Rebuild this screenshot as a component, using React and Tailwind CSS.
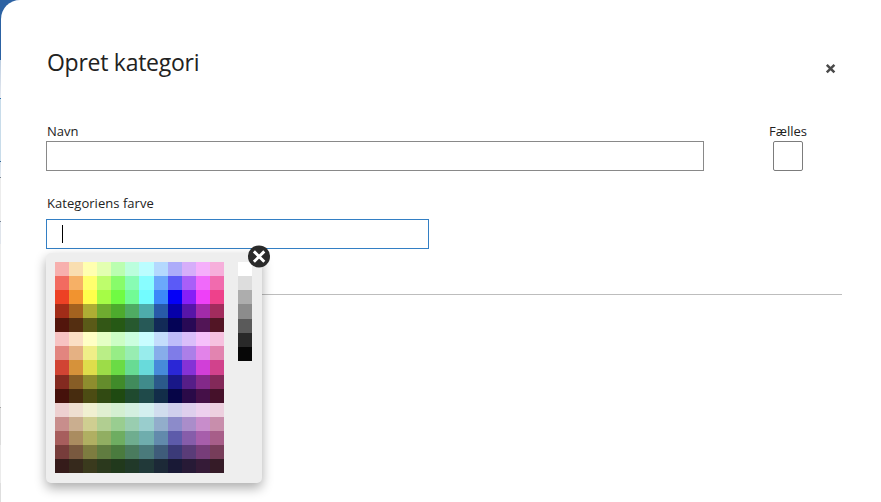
import React from 'react';

const swatches = [
  ['#f7b0ae', '#f9deb0', '#ffffb0', '#e3ffb1', '#bbfeb0', '#bbfedd', '#bbfdff', '#b4d9fe', '#adacfa', '#d6aefa', '#f5affb', '#f6afdb'],
  ['#f26b60', '#f6b066', '#ffff6e', '#befd6c', '#88fc6a', '#88fcb4', '#88fdff', '#6ba8fb', '#5b5af7', '#a95ff8', '#f06afa', '#f16bae'],
  ['#ed4124', '#f1932f', '#ffff4b', '#a6fc46', '#70fb43', '#72fb96', '#72fcff', '#3c88f8', '#0400f7', '#861ff7', '#ee40f8', '#ee418b'],
  ['#a12c18', '#a4621f', '#aead34', '#6fac30', '#4dab2d', '#4fab63', '#4eacac', '#285aa8', '#0600a8', '#5715a8', '#a22ba9', '#a22c5d'],
  ['#52150c', '#542e11', '#5a5a18', '#335716', '#265915', '#27592f', '#275957', '#122a57', '#040356', '#280955', '#521556', '#521525'],
  ['#f7c3c2', '#fbdfc4', '#ffffc5', '#e5ffc5', '#ccfec4', '#cbfedf', '#c9fdff', '#c4ddfc', '#bebcfa', '#dabefa', '#f6c0fb', '#f6c1df'],
  ['#e2857f', '#e5b183', '#efee88', '#baee87', '#97ed86', '#98edb2', '#98ecec', '#87adea', '#7f7ce8', '#ac7fe8', '#e283e9', '#e284b0'],
  ['#d14433', '#d6923a', '#dfdd4b', '#9ddc48', '#6adb45', '#68db94', '#68dadb', '#478ad9', '#2a27d6', '#8532d6', '#d13fd8', '#d1428c'],
  ['#832a20', '#875d26', '#8e8d2e', '#648c2c', '#408b2a', '#418b5c', '#408b8b', '#2b598a', '#191788', '#561e88', '#832989', '#832959'],
  ['#45110b', '#472c0f', '#4c4c13', '#314a12', '#1f4a11', '#1f4a2f', '#1f4a4a', '#122d49', '#060547', '#2a0a48', '#451048', '#45112a'],
  ['#edd0d0', '#eedfd0', '#f0f0d1', '#e0efd1', '#d4efd1', '#d4efe0', '#d4efef', '#d1ddee', '#cfcfed', '#decfed', '#edd0ee', '#edd0df'],
  ['#c88e8c', '#caae8f', '#cfce91', '#b1ce91', '#99cd90', '#99cdb0', '#99cdcd', '#92adcb', '#8c8bca', '#aa8dca', '#c88dcb', '#c88eac'],
  ['#a75e5d', '#aa8c60', '#b0af62', '#91ae62', '#6ead61', '#6fad8f', '#6fadad', '#628aac', '#5d5baa', '#865daa', '#a75eab', '#a75e89'],
  ['#773d3b', '#79593f', '#7d7c40', '#607c40', '#4a7b3e', '#4a7b5e', '#4a7a7b', '#3f5c7a', '#3b3a78', '#5a3c78', '#773d79', '#773d5a'],
  ['#351b1a', '#36291c', '#3a3a1d', '#2b391d', '#21391c', '#213929', '#213939', '#1c2937', '#191936', '#271a36', '#351b37', '#351b27'],
];

const grays = ['#ffffff', '#dddddd', '#adadad', '#8c8c8c', '#5a5a5a', '#292929', '#070707'];

/* The sliver of the underlying page visible beside the dialog */
function PageEdge() {
  return (
    <div className="flex w-px shrink-0 flex-col">
      <div className="h-[60px] bg-[#2c62a3]" />
      <div className="h-[38px] bg-linear-to-b from-[#bccde0] to-[#e7eaf0]" />
      <div className="h-px bg-[#2f71af]" />
      <div className="h-[62px] bg-[#c8dcea]" />
      <div className="h-px bg-[#2f6899]" />
      <div className="h-[15px] bg-linear-to-b from-[#d4dfea] to-[#e6ebf1]" />
      <div className="h-px bg-[#7a8794]" />
      <div className="h-[43px] bg-[#ececec]" />
      <div className="h-px bg-[#778596]" />
      <div className="h-[22px] bg-[#dfe4eb]" />
      <div className="h-[163px] bg-[#ededed]" />
      <div className="h-px bg-[#a2a2a2]" />
      <div className="h-[37px] bg-[#dcdcdc]" />
      <div className="h-[38px] bg-[#ebebeb]" />
      <div className="h-[19px] bg-[#dedede]" />
    </div>
  );
}

function ColorPicker() {
  return (
    <div className="absolute left-0 top-[34px] flex h-[230px] w-[216px] items-start gap-3.5 rounded-[5px] bg-[#eeeeee] pl-[9px] pt-[9px] shadow-[0_5px_12px_rgba(0,0,0,0.33)]">
      <div className="grid h-[211px] w-[169px] grid-cols-12 grid-rows-15">
        {swatches.flat().map((color, i) => (
          <div key={i} style={{ backgroundColor: color }} />
        ))}
      </div>
      <div className="grid h-[99px] w-3.5 grid-rows-7">
        {grays.map((color) => (
          <div key={color} style={{ backgroundColor: color }} />
        ))}
      </div>

      {/* Close badge */}
      <button type="button" aria-label="Luk" className="absolute -right-[8px] -top-[8px] size-[22px]">
        <svg viewBox="0 0 22 22" className="block size-full overflow-visible">
          <circle cx="11" cy="11.4" r="11" fill="#2a2a2a" />
          <path d="M5.9 6.4l10.4 10.4M16.3 6.4l-10.4 10.4" stroke="#fff" strokeWidth="2.9" />
        </svg>
      </button>
    </div>
  );
}

export default function App() {
  return (
    <div className="flex h-[502px] w-[881px] overflow-hidden bg-linear-to-b from-[#2c62a3] from-[60px] to-white to-[60px] font-['Open_Sans',sans-serif] text-[13px] leading-[18px] text-[#222222]">
      <PageEdge />

      <div className="flex-1 rounded-tl-[19px] bg-white pl-[45px] pr-[39px]">
        <header className="flex h-[122px] items-start justify-between pt-[46px]">
          <h1 className="pl-px text-[23px] leading-8 tracking-[-0.27px]">Opret kategori</h1>
          <button type="button" aria-label="Luk" className="mr-[7px] mt-[18px]">
            <svg viewBox="0 0 9 9" className="block size-[9px] overflow-visible">
              <path d="M.8.8l7.6 7.6M8.4.8L.8 8.4" stroke="#4a4a4a" strokeWidth="2.5" />
            </svg>
          </button>
        </header>

        <div className="flex justify-between">
          <label className="block w-[658px]">
            <span className="block h-[19px] pl-px">Navn</span>
            <input className="block h-[30px] w-full border border-[#898989] px-[15px] outline-none" />
          </label>
          <label className="mr-[35px] flex flex-col items-center">
            <span className="block h-[19px]">Fælles</span>
            <span className="block size-[30px] rounded-[2px] border border-[#7c7c7c]" />
          </label>
        </div>

        <div className="mt-[23px]">
          <div className="h-[25px] pl-px tracking-[0.04px]">Kategoriens farve</div>
          <div className="relative z-10 w-[383px]">
            <div className="flex h-[30px] items-center border border-[#337fc4] pl-[15px]">
              <span className="-mt-px h-[18px] w-px bg-black" />
            </div>
            <ColorPicker />
          </div>
        </div>

        <hr className="mt-[45px] border-[#bdbdbd]" />
      </div>
    </div>
  );
}
